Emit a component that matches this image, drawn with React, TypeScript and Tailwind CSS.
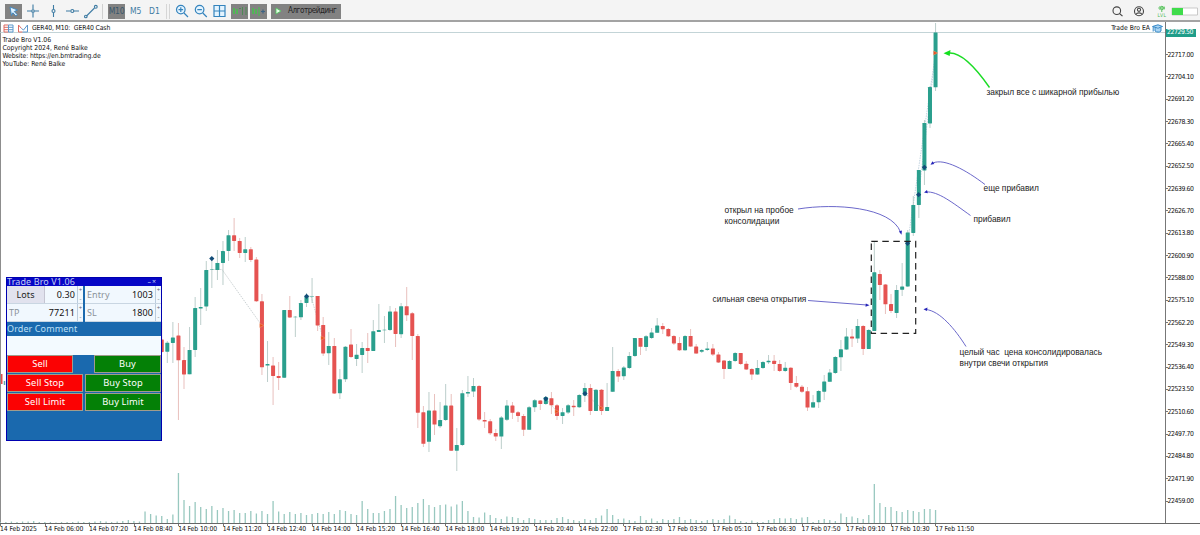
import type { ReactNode } from 'react';

type Candle = [up: 0 | 1, high: number, top: number, bottom: number, low: number];

const STEP = 5.567;
const FIRST_X = 0.3;
const candleX = (i: number) => FIRST_X + i * STEP;

// candles start at slot 29, everything before sits behind the panel
const FIRST_CANDLE = 29;
const candles: Candle[] = [
  [0, 322, 339.5, 352, 353], [1, 341, 342.7, 351.7, 363], [1, 322, 337.5, 343, 363], [0, 323, 335.5, 360.3, 420],
  [0, 347, 360, 374.5, 389], [1, 327, 350, 374.3, 374.3], [1, 297, 308, 350, 357], [1, 288, 307, 308.4, 325],
  [1, 261, 270, 306.5, 311], [1, 259, 269.4, 269.9, 288], [1, 250, 263, 270, 280], [1, 241, 251, 263, 285],
  [1, 230, 235.3, 251, 261], [0, 218, 235.3, 241, 251], [0, 238, 241, 253, 258], [1, 237, 249.3, 253, 262],
  [0, 247, 249.3, 260, 262], [0, 257, 259.5, 301.3, 302], [0, 294, 301.3, 367.3, 375], [1, 341, 364, 365.6, 382],
  [0, 357, 365.5, 376, 405], [0, 362, 376, 378, 390], [1, 310, 310, 377.7, 378], [0, 296, 310, 317.5, 318],
  [1, 316, 316.8, 317.3, 337], [1, 300, 303, 317.3, 320], [1, 293, 296.5, 303, 307], [1, 278, 296, 296.5, 303],
  [0, 296, 296, 325.5, 331], [0, 317, 325, 353.5, 356], [1, 332, 346, 353.2, 365], [0, 338, 346, 393.5, 394],
  [1, 369, 379.3, 393.2, 399], [1, 346, 346.7, 379.3, 382], [0, 329, 344.5, 357, 358], [1, 344, 354.7, 359, 366],
  [1, 342, 348, 355, 373], [0, 333, 348, 351, 363], [1, 320, 331.3, 351, 351], [1, 304, 330, 332, 332],
  [1, 316, 329.7, 330.2, 343], [1, 306, 311.5, 330, 331], [0, 308, 311.5, 334, 347], [1, 303, 306.2, 334.2, 338],
  [0, 287, 306.2, 315.3, 321], [0, 312, 313.3, 336, 360], [0, 334, 336, 412.7, 428], [0, 406, 412.3, 443.8, 447],
  [1, 392, 410.5, 441.8, 452], [0, 394, 410.5, 424.6, 435], [1, 402, 420, 426.2, 428], [1, 384, 405.5, 420, 421],
  [0, 394, 405.5, 450.7, 451], [1, 428, 445, 450.7, 471], [1, 390, 393.2, 445, 446], [1, 376, 392, 393.6, 397],
  [1, 378, 386, 391.6, 397], [0, 385, 386, 419.5, 421], [0, 412, 420, 421.6, 428], [0, 419, 421.2, 433.3, 435],
  [0, 429, 433, 436.6, 441], [1, 416, 417.5, 436.6, 449], [1, 400, 405.5, 419.8, 421], [0, 402, 405.5, 412.8, 419],
  [0, 411, 412.3, 416, 422], [0, 414, 416, 429.8, 436], [1, 406, 407.2, 429.8, 430], [1, 399, 400.2, 407.2, 412],
  [0, 400, 400.5, 404, 410], [1, 396, 397, 404, 405], [0, 392, 398.2, 405.3, 414], [0, 404, 405.3, 416, 420],
  [1, 408, 412.3, 416, 424], [1, 404, 405.3, 412.6, 414], [0, 400, 405.8, 407.2, 416], [1, 394, 395, 407.2, 408],
  [1, 383, 388, 395.5, 402], [0, 384, 388, 411, 415], [1, 389, 389.8, 411, 411], [0, 389, 389.8, 411, 415],
  [1, 383, 407, 411, 411], [1, 347, 371, 391.8, 392], [0, 369, 371, 376.6, 382], [1, 366, 367.6, 376.2, 380],
  [1, 352, 356, 368, 369], [1, 338, 338, 356, 357], [0, 338, 338, 346.8, 355], [1, 335, 336.2, 347, 351],
  [1, 328, 332.6, 338, 339], [1, 318, 325.6, 332.8, 333], [0, 323, 326, 329.2, 334], [0, 328, 329, 336.3, 337],
  [0, 335, 336, 343.5, 345], [0, 337, 343, 350.3, 351], [1, 335, 336, 350.3, 351], [0, 329, 336, 346.6, 347],
  [0, 344, 346.6, 353.6, 354], [1, 349, 350, 351.7, 353], [1, 342, 348.4, 350, 351], [0, 344, 348.4, 354.6, 356],
  [0, 352, 354.6, 362.5, 363], [0, 360, 360.5, 369, 379], [1, 360, 361, 369, 369], [1, 352, 353, 361, 362],
  [0, 353, 353, 364, 365], [0, 361, 363.8, 369.5, 370], [0, 368, 369, 374.6, 380], [1, 360, 368, 374.6, 375],
  [1, 361, 362, 368, 369], [1, 355, 360.8, 362.3, 364], [0, 355, 360.8, 364, 371], [0, 360, 364, 371, 372],
  [1, 362, 367.7, 371, 372], [0, 367, 367.7, 383, 390], [0, 376, 383, 386.7, 388], [0, 385, 386.7, 391.7, 393],
  [0, 387, 391.2, 407.6, 411], [1, 395, 402.2, 407.6, 408], [1, 390, 391, 402.2, 408], [1, 375, 381.5, 391.7, 400],
  [1, 369, 372.6, 381.8, 382], [1, 356, 357, 373, 374], [1, 340, 349.3, 357.3, 371], [1, 328, 336.5, 349.6, 350],
  [0, 329, 336.6, 338.6, 347], [1, 319, 326, 338.6, 343], [0, 325, 326, 349, 355], [1, 329, 330, 349, 349],
  [1, 242, 272.3, 331, 331], [0, 270, 274, 285, 300], [0, 284, 284.6, 304.3, 314], [0, 294, 304, 311, 313],
  [1, 285, 290, 313, 318], [1, 263, 286.5, 289.7, 296], [1, 230, 232.5, 286.5, 287], [1, 196, 205, 233, 236],
  [1, 170, 170, 205, 218], [1, 120, 123, 170.5, 185], [1, 86, 87, 123.5, 128], [1, 23, 32.5, 87.3, 91],
];

const volumes = [
  1, 1, 1.5, 1, 1.5, 1.5, 2, 1, 1, 1, 0.5, 1, 1, 1, 1.5, 1, 1, 1.5, 2, 1.5, 1, 1.5, 2, 3, 2, 1.5,
  11.5, 9, 7.5, 7, 4, 8.5, 50, 23, 17, 21, 16, 14, 17, 13, 15, 12, 13, 10, 10, 12, 9.5, 12, 9, 22,
  11.5, 9, 11, 9, 10, 8, 9, 10, 9, 11, 9, 13, 12, 9, 8, 22, 14, 10, 10, 12, 14, 27, 18, 15, 16, 20,
  24, 18, 16, 18, 18.5, 16.5, 18.5, 22, 12, 6, 5.5, 10.5, 8, 5, 4, 6.5, 6, 5, 3, 5, 4, 3, 3, 3, 5,
  6, 4, 3, 2, 4, 3, 5, 7.5, 14, 8, 4, 4.5, 3, 2, 7, 3, 4.5, 2, 4, 3, 4, 6, 3, 4, 3, 2, 3, 4, 3, 4,
  7.5, 4, 2, 1, 2.5, 1, 1, 3, 4, 5, 4.5, 5, 4, 5.5, 6, 1, 3, 4, 3, 2, 9.5, 6, 6.5, 5, 4, 8, 39, 20,
  16, 16, 12, 11, 13, 12, 11, 14, 14, 13,
];

const prices = Array.from({ length: 21 }, (_, i) => (22717 - i * 12.9).toFixed(2));

const times = [
  '14 Feb 2025', '14 Feb 06:00', '14 Feb 07:20', '14 Feb 08:40', '14 Feb 10:00', '14 Feb 11:20',
  '14 Feb 12:40', '14 Feb 14:00', '14 Feb 15:20', '14 Feb 16:40', '14 Feb 18:00', '14 Feb 19:20',
  '14 Feb 20:40', '14 Feb 22:00', '17 Feb 02:30', '17 Feb 03:50', '17 Feb 05:10', '17 Feb 06:30',
  '17 Feb 07:50', '17 Feb 09:10', '17 Feb 10:30', '17 Feb 11:50',
];

const buys: [number, number][] = [[211.8, 258.6], [306.6, 296.3], [545.8, 398.8], [585, 393.6], [907.6, 243.3], [918.6, 194.7], [924.4, 167.3]];
const exits: [number, number][] = [[261.8, 325.5], [323, 338], [557, 411.5], [601.5, 408], [935.6, 53]];

function Toolbar() {
  return (
    <header className="flex h-[22px] items-center border-b-2 border-[#a3a3a3] bg-[#f4f4f4] pl-[5px] pt-[2px] text-[#3d7ba3]">
      <div className="flex h-[15px] w-[17px] items-center justify-center bg-[#828282]">
        <svg width="11" height="12" viewBox="0 0 11 12">
          <path d="M2 2l7.5 3-3.2 1.5 3 3.2-1.4 1.3-3-3.2L3.5 10.5z" fill="#dff1ff" stroke="#3c86c0" strokeWidth=".9" />
        </svg>
      </div>
      <svg className="ml-[2px]" width="78" height="16" viewBox="0 0 78 16" fill="none" stroke="currentColor" strokeWidth="1.1">
        <path d="M9 1.5V6.5M9 9.5V14.5M3 8h4.5M10.5 8H15" />
        <circle cx="9" cy="8" r="1.3" />
        <path d="M29.5 2v4M29.5 10v4" />
        <circle cx="29.5" cy="8" r="1.5" />
        <path d="M42 8h4.5M50 8h5" />
        <circle cx="48.3" cy="8" r="1.5" />
        <path d="M62.5 13l8-8" />
        <circle cx="61.8" cy="13.5" r="1.3" />
        <circle cx="71.8" cy="3.8" r="1.4" />
      </svg>
      <div className="h-[15px] w-px bg-[#d0d0d0]" />
      <div className="ml-[5px] flex h-[15px] w-[17px] items-center justify-center bg-[#828282] text-[8.5px] tracking-[-0.2px] text-[#38576c]">M10</div>
      <div className="ml-[5px] w-3 text-[8.5px]">M5</div>
      <div className="ml-[7px] w-3 text-[8.5px]">D1</div>
      <div className="ml-[5px] h-[15px] w-1 border-x border-[#d6d6d6]" />
      <svg className="ml-1" width="54" height="18" viewBox="0 0 54 18" fill="none" stroke="#3584bd" strokeWidth="1.2">
        <circle cx="6.8" cy="7.6" r="4.3" fill="#e4f4ff" />
        <path d="M10 11l4 4M4.5 7.6h4.6M6.8 5.3v4.6" />
        <circle cx="25.6" cy="7.6" r="4.3" fill="#e4f4ff" />
        <path d="M28.800 11l4 4M23.300 7.600h4.600" />
        <path d="M40 3.500h11v11H40zM45.500 3.500v11M40 9h11" fill="#e4f4ff" />
      </svg>
      <div className="ml-[3px] h-[15px] w-[17px] bg-[#828282]">
        <svg width="17" height="15" viewBox="0 0 17 15" fill="none" stroke="#43c649" strokeWidth="1.5">
          <path d="M3 4v6M6 5v5" />
          <path d="M8 4.500h2M11.500 3v8M15 3v8" stroke="#4d8a55" strokeWidth="1" />
        </svg>
      </div>
      <div className="ml-[2px] h-[15px] w-[17px] bg-[#828282]">
        <svg width="17" height="15" viewBox="0 0 17 15" fill="none" stroke="#43c649" strokeWidth="1.5">
          <path d="M3 4v6M6 5v5" />
          <path d="M9 3v9" strokeWidth="1" />
          <path d="M11 7.500h4M13 5.500v4" stroke="#3c6284" strokeWidth="1.2" />
        </svg>
      </div>
      <div className="ml-1 flex h-[15px] w-[70px] items-center bg-[#828282]">
        <svg className="ml-1" width="7" height="8" viewBox="0 0 7 8">
          <path d="M1 1l5 3-5 3z" fill="#e4ffe7" stroke="#4ec75c" strokeWidth=".8" />
        </svg>
        <span className="ml-[6px] whitespace-nowrap text-[8px] leading-[14px] tracking-[-0.45px] text-[#222]">Алготрейдинг</span>
      </div>
      <svg className="-mt-[2px] ml-auto" width="90" height="20" viewBox="0 0 90 20" fill="none" stroke="#444" strokeWidth="1.1">
        <circle cx="6.8" cy="10.7" r="3.8" />
        <path d="M9.500 13.500l3 2.700" />
        <circle cx="29" cy="11.300" r="4.500" />
        <circle cx="29" cy="9.800" r="1.600" />
        <path d="M26 14.500c1-2.200 5-2.200 6 0" />
        <g stroke="#5ac35f" strokeWidth="1">
          <circle cx="51.800" cy="8" r="1.700" fill="#8fd992" />
          <path d="M49.500 6.500c-.6 1-.6 2 0 3M54.100 6.500c.6 1 .6 2 0 3M51.800 10v2" />
        </g>
        <text x="47.600" y="16.800" fontSize="5" fill="#4fb955" stroke="none" textLength="8.500">LVL</text>
        <path d="M62 8h25.500v7H62z" fill="#fff" stroke="#bcbcbc" strokeWidth=".8" />
        <path d="M62 8h11v7H62z" fill="#3fdc4b" stroke="none" />
      </svg>
    </header>
  );
}

function Plot() {
  return (
    <svg className="absolute -left-px top-0" width="1165" height="501" viewBox="0 22 1165 501">
      <path d="M0 32.500H1165" stroke="#b4c9cd" strokeWidth=".8" />
      <path d="M1 374h1.500v10H1z" fill="#e2504c" />
      <path d="M4.500 381v4" stroke="#6aa" strokeWidth="1.500" />
      <g stroke="#98c8bf" strokeWidth="1.300">
        {volumes.map((h, i) => (
          <path key={i} d={`M${candleX(i)} 523v${-h}`} />
        ))}
      </g>
      <g fill="none" stroke="#b5bdc0" strokeWidth=".7" strokeDasharray="1.500 1">
        <path d="M211.800 269.500H222L261.800 325.500M306.600 296.300H311L323 338M545.800 398.800L557 411.500M585 393.600L601.500 408" />
        <path d="M907.600 243L935.600 53M918.600 194.700L935.600 53" stroke="#a9c2d3" />
      </g>
      {candles.map(([up, high, top, bottom, low], i) => {
        const x = candleX(i + FIRST_CANDLE);
        return (
          <g key={i}>
            <path d={`M${x} ${high}V${low}`} stroke={up ? '#9fb9b4' : '#dfa5a1'} strokeWidth=".7" />
            <rect x={x - 2} y={top} width="4" height={bottom - top} rx=".4" fill={up ? '#2a9f8d' : '#e55351'} />
          </g>
        );
      })}
      {buys.map(([x, y]) => (
        <path key={x} d={`M${x} ${y - 2.6}l2.6 2.6-2.6 2.6-2.6-2.6z`} fill="#124d78" />
      ))}
      {exits.map(([x, y]) => (
        <path key={x} d={`M${x - 2} ${y - 2}l4 2-4 2z`} fill="#e8491f" stroke="#f0a070" strokeWidth=".5" />
      ))}
      <path d="M871.300 241.300h44.400V333.300h-44.400z" fill="none" stroke="#222" strokeWidth="1.200" strokeDasharray="6.500 4.500" />
      <g fill="none" stroke="#5a57c4" strokeWidth=".9">
        <path d="M798 209C835 203 891 207 900.500 232" />
        <path d="M808 300.500L867 305" />
        <path d="M985 184.500C966 170 944 158 933 163" />
        <path d="M970.500 215.500C953 203 938 191 926 192" />
        <path d="M966 346.500C955 329 940 311 926 309.500" />
      </g>
      <g fill="#2524b8">
        <path d="M901.500 234.800l-2.600-3.200 3-1z" />
        <path d="M869.500 305.200l-4 1.600.3-3.400z" />
        <path d="M930.500 164.800l2-3.600 1.800 2.700z" />
        <path d="M924 192.500l3-2.500.8 3.300z" />
        <path d="M923.500 309.200l4-1.600-.6 3.400z" />
      </g>
      <path d="M989.500 87.500C978 71 963 53 950 53" fill="none" stroke="#1bdc25" strokeWidth="1.400" />
      <path d="M943.500 53.300l7-3.200-.8 5.800z" fill="#14e01e" />
    </svg>
  );
}

function Note({ className, children }: { className: string; children: ReactNode }) {
  return (
    <div className={`absolute whitespace-pre font-['Liberation_Sans',sans-serif] text-[8.35px] leading-[10.5px] text-[#222] ${className}`}>
      {children}
    </div>
  );
}

function Field({ label, value, button }: { label: string; value: string; button?: boolean }) {
  return (
    <div className="flex h-[18px] items-stretch border-b border-[#c9d6e2] bg-[#f1f8fe] text-[9px]">
      <div
        className={
          button
            ? 'flex w-[38px] items-center justify-center border-r border-[#c5c5d2] bg-[#e1e2ee] text-[#222]'
            : 'flex w-[30px] items-center pl-[2px] text-[#8b9299]'
        }
      >
        {label}
      </div>
      <div className="flex flex-1 items-center justify-end pr-[2px] text-[#111]">{value}</div>
      <div className="flex w-[6px] flex-col justify-around border-l border-[#bcd] text-center text-[6px] leading-[6px] text-[#667]">
        <span>+</span>
        <span>-</span>
      </div>
    </div>
  );
}

function OrderButton({ label, sell, className }: { label: string; sell?: boolean; className: string }) {
  return (
    <button
      type="button"
      className={`h-[18.5px] border border-[#a09c8c] text-[9.3px] leading-none text-white ${sell ? 'bg-[#fb0203]' : 'bg-[#048006]'} ${className}`}
    >
      {label}
    </button>
  );
}

function TradePanel() {
  return (
    <section className="absolute left-[5px] top-[255px] flex h-[164px] w-[156px] flex-col border border-[#0000b0] bg-[#1a69ae] font-['Noto_Sans',sans-serif] tracking-[0.1px]">
      <div className="flex h-2 items-center justify-between bg-[#0606c6] pr-1 text-[9px] leading-[8px] text-[#c3cef2]">
        <span>Trade Bro V1.06</span>
        <span className="text-[7px] tracking-[1px]">–×</span>
      </div>
      <div className="grid grid-cols-[76px_76px] gap-x-[2px]">
        <Field label="Lots" value="0.30" button />
        <Field label="Entry" value="1003" />
        <Field label="TP" value="77211" />
        <Field label="SL" value="1800" />
      </div>
      <div className="h-[14px] text-[9px] leading-[14px] text-[#bfe0f7]">Order Comment</div>
      <div className="h-[18.5px] bg-[#f3faff]" />
      <div className="flex flex-col gap-[0.5px]">
        <div className="flex justify-between">
          <OrderButton label="Sell" sell className="w-[66px]" />
          <OrderButton label="Buy" className="w-[67px]" />
        </div>
        <div className="flex justify-between">
          <OrderButton label="Sell Stop" sell className="w-[76px]" />
          <OrderButton label="Buy Stop" className="w-[76px]" />
        </div>
        <div className="flex justify-between">
          <OrderButton label="Sell Limit" sell className="w-[76px]" />
          <OrderButton label="Buy Limit" className="w-[76px]" />
        </div>
      </div>
    </section>
  );
}

function ChartHeader() {
  return (
    <div className="flex h-[13px] items-center pl-[2px] pr-[2px] text-[6.8px] text-[#111]">
      <svg width="26" height="9" viewBox="0 0 26 9" fill="none" strokeWidth="1">
        <path d="M5.500 1H1v7h4.500M1 3.300h4M1 5.700h4" stroke="#dd6a62" />
        <path d="M5.500 1H10v7H5.500zM6 3.300h4M6 5.700h4" stroke="#5d98cc" />
        <path d="M19.500 8H15.500V1l3 3.500" stroke="#dd6a62" />
        <path d="M18.500 4.500l2 1.500L24.500 1v7h-5" stroke="#5d98cc" />
      </svg>
      <span className="ml-[3px] whitespace-pre tracking-[-0.13px]">GER40, M10:  GER40 Cash</span>
      <span className="ml-auto">Trade Bro EA</span>
      <svg className="ml-[2px]" width="11" height="9" viewBox="0 0 11 9" fill="none" stroke="#3488c8" strokeWidth="1">
        <path d="M.500 2.500L6 .800l4.500 1.700L6 4.200zM1.200 3v4.500M3 3.500v3.500c2 1.500 4.500 1.500 6 0V3.500" fill="#a9d4f3" />
      </svg>
    </div>
  );
}

export default function App() {
  return (
    <div className="flex h-[535px] w-[1200px] flex-col overflow-hidden bg-white font-['DejaVu_Sans_Condensed','DejaVu_Sans',sans-serif]">
      <Toolbar />
      <main className="flex h-[501px]">
        <div className="relative w-[1165px] border-l border-[#8d8d8d]">
          <Plot />
          <div className="relative">
            <ChartHeader />
            <div className="pl-[1.5px] pt-[0.5px] text-[6.8px] leading-[8.1px] text-[#111]">
              <p>Trade Bro V1.06</p>
              <p>Copyright 2024, René Balke</p>
              <p className="tracking-[-0.1px]">Website: https://en.bmtrading.de</p>
              <p>YouTube: René Balke</p>
            </div>
          </div>
          <TradePanel />
          <Note className="left-[985.5px] top-[65px]">закрыл все с шикарной прибылью</Note>
          <Note className="left-[982.5px] top-[161px]">еще прибавил</Note>
          <Note className="left-[972.5px] top-[192px]">прибавил</Note>
          <Note className="left-[723.5px] top-[183px]">{'открыл на пробое\nконсолидации'}</Note>
          <Note className="left-[711.5px] top-[272px]">сильная свеча открытия</Note>
          <Note className="left-[958.5px] top-[325px]">{'целый час  цена консолидировалась\nвнутри свечи открытия'}</Note>
        </div>
        <aside className="flex w-[35px] flex-col border-l border-[#777] pt-[6.5px] text-[6.8px] tracking-[-0.4px] text-[#111]">
          <div className="flex h-[8px] w-[30px] items-center bg-[#1f9d89] pl-px text-white">22729.50</div>
          <div className="mt-[7px] flex flex-col">
            {prices.map((price) => (
              <div key={price} className="flex h-[22.34px] items-center">
                <span className="h-px w-[1.5px] bg-[#777]" />
                {price}
              </div>
            ))}
          </div>
        </aside>
      </main>
      <footer className="flex h-3 w-[1200px] border-t border-[#666] text-[6.8px] leading-[11px] tracking-[-0.1px] text-[#111]">
        {times.map((time) => (
          <div key={time} className="w-[44.54px] shrink-0 whitespace-nowrap">
            <div className="-mb-[2px] h-[2px] w-px bg-[#777]" />
            {time}
          </div>
        ))}
      </footer>
    </div>
  );
}
